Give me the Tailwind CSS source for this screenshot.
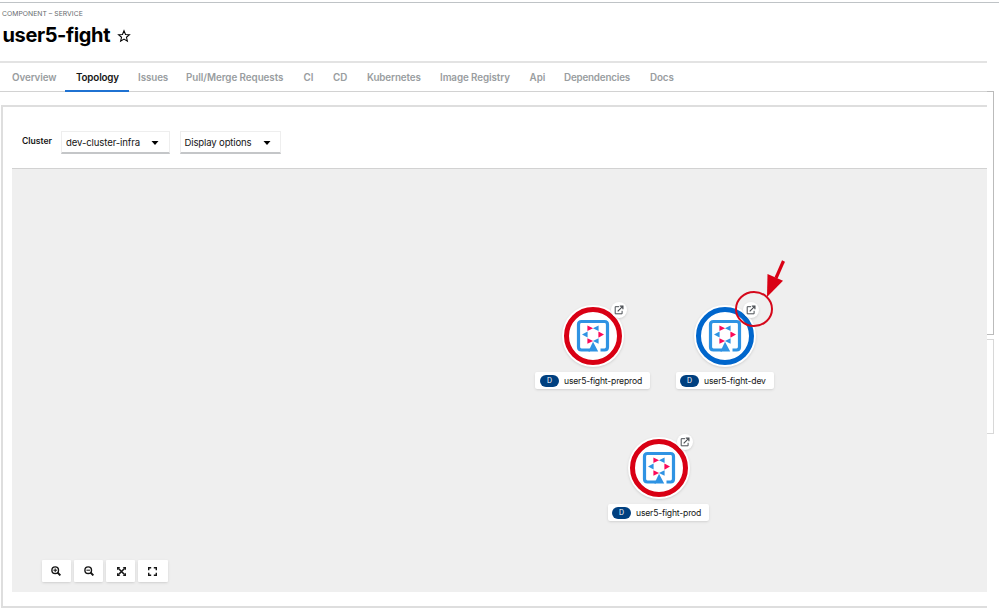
<!DOCTYPE html>
<html lang="en">
<head>
<meta charset="utf-8">
<title>user5-fight</title>
<script src="https://cdn.jsdelivr.net/npm/@tailwindcss/browser@4"></script>
</head>
<body class="bg-white">
<svg class="hidden">
  <symbol id="quarkus" viewBox="0 0 34 34">
    <path d="M14 31H5.5Q2.5 31 2.5 28V5.5Q2.5 2.5 5.5 2.5H28.5Q31.5 2.5 31.5 5.5V28Q31.5 31 28.5 31H24.5" fill="none" stroke="#2f93e3" stroke-width="3.2"/>
    <path d="M17 22.8L22.2 32.6H12.4Z" fill="#2f93e3"/>
    <path d="M11.4 6.4V12L17.1 9.2ZM11.4 19.2V24.8L17.1 22ZM22.4 12.4V18.8L28 15.6Z" fill="#fc0a59"/>
    <path d="M22.6 6.4V12L16.9 9.2ZM22.6 19.2V24.8L16.9 22ZM11.6 12.6V18.6L6 15.6Z" fill="#2f93e3"/>
  </symbol>
  <symbol id="open" viewBox="0 0 10 10">
    <path d="M5 1.7H1.2V8.8H8.1V5.8" fill="none" stroke="#4b4f54" stroke-width="1"/>
    <path d="M3.7 6.3L8.2 1.8M5.8 1.1H8.9V4.2" fill="none" stroke="#4b4f54" stroke-width="1.2"/>
  </symbol>
</svg>
<div class="relative flex h-[609px] w-[999px] flex-col overflow-hidden bg-white pt-[2px] font-['Inter',sans-serif] text-[#151515]">
  <header class="h-[59px] border-t border-[#bfc3c6] pl-[2px]">
    <div class="mt-[7px] h-[8px] text-[6.8px] leading-[8px] whitespace-nowrap text-[#666a6e] tracking-[0.04px]">COMPONENT – SERVICE</div>
    <div class="mt-[5px] flex h-[25px] items-center">
      <h1 class="w-[108px] pl-[0.5px] text-[20px] leading-[25px] font-bold whitespace-nowrap text-black tracking-[-0.38px]">user5-fight</h1>
      <svg class="ml-[7px] h-[14px] w-[14px]" viewBox="0 0 24 24"><path d="M12 3L14.6 9.3L21.4 9.8L16.2 14.2L17.8 20.8L12 17.2L6.2 20.8L7.8 14.2L2.6 9.8L9.4 9.3Z" fill="none" stroke="#000" stroke-width="1.8"/></svg>
    </div>
  </header>
  <nav class="flex h-[31px] w-[987px] border-t-2 border-b border-t-[#e3e3e3] border-b-[#d2d2d2] pl-[2px] text-[9.8px] leading-[29px] font-semibold whitespace-nowrap text-[#999da0]">
    <div class="w-[63px] pl-[10px] tracking-[-0.08px]">Overview</div>
    <div class="z-10 h-[29px] w-[64px] border-b-2 border-[#1f72d2] pl-[11px] tracking-[-0.15px] text-[#151515]">Topology</div>
    <div class="w-[47px] pl-[9px] tracking-[-0.08px]">Issues</div>
    <div class="w-[118px] pl-[10px] tracking-[-0.04px]">Pull/Merge Requests</div>
    <div class="w-[29px] pl-[9.5px]">CI</div>
    <div class="w-[34px] pl-[10px]">CD</div>
    <div class="w-[73px] pl-[10px] tracking-[-0.1px]">Kubernetes</div>
    <div class="w-[90px] pl-[10px] tracking-[-0.08px]">Image Registry</div>
    <div class="w-[34px] pl-[9.5px]">Api</div>
    <div class="w-[86px] pl-[10px] tracking-[-0.18px]">Dependencies</div>
    <div class="pl-[10px] tracking-[-0.1px]">Docs</div>
  </nav>
  <main class="mt-[13px] ml-px h-[503px] w-[986px] border-y-2 border-l-2 border-[#dedede] pl-[9px]">
    <div class="flex h-[61px] pt-[24px] pl-[10px] text-[9.6px] whitespace-nowrap">
      <div class="w-[39px] text-[8.6px] leading-[20px] font-semibold">Cluster</div>
      <div class="flex h-[23px] w-[109px] items-center justify-between border border-b-2 border-b-[#c4c6c8] border-[#eee] pt-px pr-[10px] pl-[4px] tracking-[-0.12px]"><span class="pt-[2px]">dev-cluster-infra</span><svg class="h-[4px] w-[8px]" viewBox="0 0 8 4"><path d="M0.5 0H7.5L4 4Z"/></svg></div>
      <div class="ml-[10px] flex h-[23px] w-[101px] items-center justify-between border border-b-2 border-b-[#c4c6c8] border-[#eee] pt-px pr-[9px] pl-[3.5px] tracking-[-0.16px]"><span class="pt-[2px]">Display options</span><svg class="h-[4px] w-[8px]" viewBox="0 0 8 4"><path d="M0.5 0H7.5L4 4Z"/></svg></div>
    </div>
    <section class="relative h-[424px] w-[975px] border-t border-[#d2d2d2] bg-[#efefef]">
      <!-- graph nodes -->
      <div class="absolute top-[136px] left-[523px] w-[115px]">
        <div class="ml-[26.5px] flex h-[62px] w-[62px] items-center justify-center rounded-full bg-white shadow-sm"><div class="flex h-[58px] w-[58px] items-center justify-center rounded-full border-[5px] border-[#d90014]"><svg class="h-[34px] w-[34px] shrink-0"><use href="#quarkus"/></svg></div></div>
        <div class="absolute -top-[3px] left-[76px] flex h-[16px] w-[16px] items-center justify-center rounded-full bg-white shadow-sm"><svg class="h-[10px] w-[10px]"><use href="#open"/></svg></div>
        <div class="mt-[5px] flex h-[17px] items-center rounded-[2px] bg-white pl-[5px] text-[8.6px] tracking-[-0.18px] whitespace-nowrap shadow-sm"><b class="mr-[5px] h-[12px] w-[19px] rounded-full bg-[#004080] text-center text-[7px] leading-[12px] font-normal text-white">D</b><span class="pt-[2px]">user5-fight-preprod</span></div>
      </div>
      <div class="absolute top-[136px] left-[664px] w-[98px]">
        <div class="ml-[17.5px] flex h-[62px] w-[62px] items-center justify-center rounded-full bg-white shadow-sm"><div class="flex h-[58px] w-[58px] items-center justify-center rounded-full border-[5px] border-[#0066cc]"><svg class="h-[34px] w-[34px] shrink-0"><use href="#quarkus"/></svg></div></div>
        <div class="absolute -top-[3px] left-[67px] flex h-[16px] w-[16px] items-center justify-center rounded-full bg-white shadow-sm"><svg class="h-[10px] w-[10px]"><use href="#open"/></svg></div>
        <div class="mt-[5px] flex h-[17px] items-center rounded-[2px] bg-white pl-[4px] text-[8.6px] tracking-[-0.16px] whitespace-nowrap shadow-sm"><b class="mr-[5px] h-[12px] w-[19px] rounded-full bg-[#004080] text-center text-[7px] leading-[12px] font-normal text-white">D</b><span class="pt-[2px]">user5-fight-dev</span></div>
      </div>
      <div class="absolute top-[268px] left-[596px] w-[101px]">
        <div class="ml-[19.5px] flex h-[62px] w-[62px] items-center justify-center rounded-full bg-white shadow-sm"><div class="flex h-[58px] w-[58px] items-center justify-center rounded-full border-[5px] border-[#d90014]"><svg class="h-[34px] w-[34px] shrink-0"><use href="#quarkus"/></svg></div></div>
        <div class="absolute -top-[3px] left-[69px] flex h-[16px] w-[16px] items-center justify-center rounded-full bg-white shadow-sm"><svg class="h-[10px] w-[10px]"><use href="#open"/></svg></div>
        <div class="mt-[5px] flex h-[17px] items-center rounded-[2px] bg-white pl-[4px] text-[8.6px] tracking-[-0.18px] whitespace-nowrap shadow-sm"><b class="mr-[5px] h-[12px] w-[19px] rounded-full bg-[#004080] text-center text-[7px] leading-[12px] font-normal text-white">D</b><span class="pt-[2px]">user5-fight-prod</span></div>
      </div>
      <!-- pointer annotation -->
      <svg class="absolute top-[91px] left-[718px] h-[70px] w-[60px]" viewBox="0 0 60 70"><ellipse cx="24" cy="49" rx="18" ry="17" fill="none" stroke="#d5081b" stroke-width="2"/><path d="M53.5 1L46 18" stroke="#d90014" stroke-width="3.2"/><path d="M37 37L37.5 14L53 20.8Z" fill="#d90014"/></svg>
      <!-- zoom controls -->
      <div class="absolute top-[391px] left-[30px] flex gap-[3px]">
        <div class="flex h-[22px] w-[29px] items-center justify-center rounded-[1px] bg-white pr-px shadow-sm"><svg class="h-[10px] w-[10px]" viewBox="0 0 10 10" fill="none" stroke="#151515" stroke-width="1.4"><circle cx="4.2" cy="4.2" r="3.3"/><path d="M6.5 6.5L9.4 9.4" stroke-width="1.9"/><path d="M2.4 4.2H6M4.2 2.4V6" stroke-width="1"/></svg></div>
        <div class="flex h-[22px] w-[29px] items-center justify-center rounded-[1px] bg-white shadow-sm"><svg class="h-[10px] w-[10px]" viewBox="0 0 10 10" fill="none" stroke="#151515" stroke-width="1.4"><circle cx="4.2" cy="4.2" r="3.3"/><path d="M6.5 6.5L9.4 9.4" stroke-width="1.9"/><path d="M2.4 4.2H6" stroke-width="1"/></svg></div>
        <div class="flex h-[22px] w-[29px] items-center justify-center rounded-[1px] bg-white pl-px shadow-sm"><svg class="h-[9px] w-[9px]" viewBox="0 0 9 9"><path d="M1.5 1.5L7.5 7.5M7.5 1.5L1.5 7.5" stroke="#151515" stroke-width="1.6"/><path d="M0 0H3.3L0 3.3ZM9 0V3.3L5.7 0ZM0 9V5.7L3.3 9ZM9 9H5.7L9 5.7Z" fill="#151515"/></svg></div>
        <div class="flex h-[22px] w-[30px] items-center justify-center rounded-[1px] bg-white pr-px shadow-sm"><svg class="h-[9px] w-[9px]" viewBox="0 0 9 9"><path d="M.7 3.2V.7H3.2M5.8 .7H8.3V3.2M8.3 5.8V8.3H5.8M3.2 8.3H.7V5.8" fill="none" stroke="#151515" stroke-width="1.4"/></svg></div>
      </div>
    </section>
  </main>
  <!-- card edges behind the panel -->
  <div class="absolute top-[91px] left-[987px] h-[244px] w-[7px] border border-l-0 border-[#bbb]"></div>
  <div class="absolute top-[339px] left-[987px] h-[95px] w-[7px] border border-l-0 border-[#d8d8d8]"></div>
</div>
</body>
</html>
